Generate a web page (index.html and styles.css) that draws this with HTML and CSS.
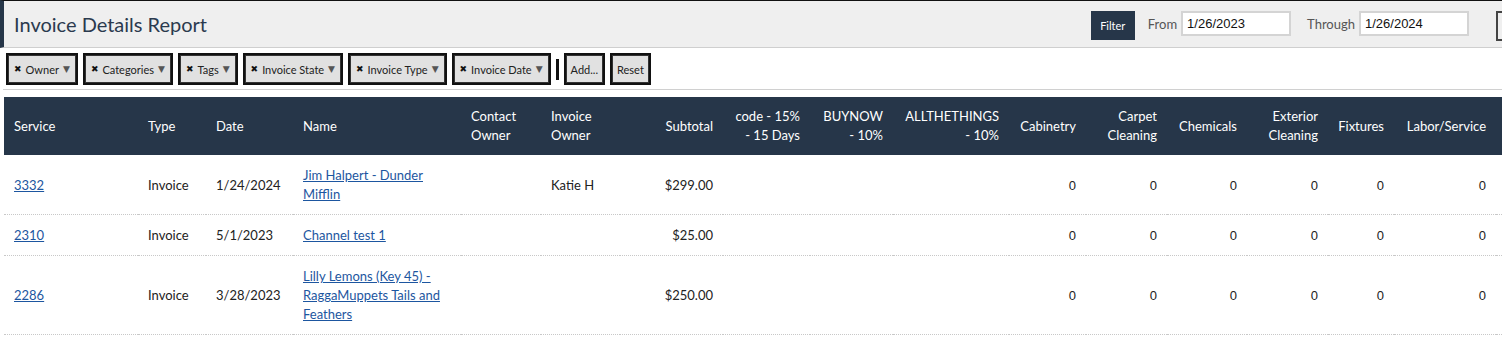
FILE: index.html
```html
<!DOCTYPE html>
<html lang="en">
<head>
    <meta charset="UTF-8">
    <meta name="viewport" content="width=device-width, initial-scale=1.0">
    <title>Invoice Details Report</title>
    <link rel="stylesheet" href="styles.css">
</head>
<body>
    <div class="page-header">
        <h1 class="page-title">Invoice Details Report</h1>
        <div class="header-controls">
            <button class="filter-btn">Filter</button>
            <label class="date-label">From</label>
            <input class="date-input" type="text" value="1/26/2023">
            <label class="date-label through">Through</label>
            <input class="date-input" type="text" value="1/26/2024">
            <button class="export-btn"></button>
        </div>
    </div>

    <div class="chip-bar">
        <span class="chip"><span class="chip-x">&#10006;</span>Owner<span class="chip-arrow">&#9660;</span></span>
        <span class="chip"><span class="chip-x">&#10006;</span>Categories<span class="chip-arrow">&#9660;</span></span>
        <span class="chip"><span class="chip-x">&#10006;</span>Tags<span class="chip-arrow">&#9660;</span></span>
        <span class="chip"><span class="chip-x">&#10006;</span>Invoice State<span class="chip-arrow">&#9660;</span></span>
        <span class="chip"><span class="chip-x">&#10006;</span>Invoice Type<span class="chip-arrow">&#9660;</span></span>
        <span class="chip"><span class="chip-x">&#10006;</span>Invoice Date<span class="chip-arrow">&#9660;</span></span>
        <span class="chip-sep"></span>
        <span class="chip plain">Add...</span>
        <span class="chip plain">Reset</span>
    </div>

    <table class="report-table">
        <colgroup>
            <col class="w-service">
            <col class="w-type">
            <col class="w-date">
            <col class="w-name">
            <col class="w-contact">
            <col class="w-owner">
            <col class="w-subtotal">
            <col class="w-code">
            <col class="w-buynow">
            <col class="w-allthethings">
            <col class="w-cabinetry">
            <col class="w-carpet">
            <col class="w-chemicals">
            <col class="w-exterior">
            <col class="w-fixtures">
            <col class="w-labor">
            <col class="w-more">
        </colgroup>
        <thead>
            <tr>
                <th>Service</th>
                <th>Type</th>
                <th>Date</th>
                <th>Name</th>
                <th>Contact<br>Owner</th>
                <th>Invoice<br>Owner</th>
                <th class="num">Subtotal</th>
                <th class="num">code - 15%<br>- 15 Days</th>
                <th class="num">BUYNOW<br>- 10%</th>
                <th class="num">ALLTHETHINGS<br>- 10%</th>
                <th class="num">Cabinetry</th>
                <th class="num">Carpet<br>Cleaning</th>
                <th class="num">Chemicals</th>
                <th class="num">Exterior<br>Cleaning</th>
                <th class="num">Fixtures</th>
                <th class="num">Labor/Service</th>
                <th></th>
            </tr>
        </thead>
        <tbody>
            <tr>
                <td><a href="#">3332</a></td>
                <td>Invoice</td>
                <td>1/24/2024</td>
                <td><a href="#">Jim Halpert - Dunder Mifflin</a></td>
                <td></td>
                <td>Katie H</td>
                <td class="num">$299.00</td>
                <td class="num"></td>
                <td class="num"></td>
                <td class="num"></td>
                <td class="num zero">0</td>
                <td class="num zero">0</td>
                <td class="num zero">0</td>
                <td class="num zero">0</td>
                <td class="num zero">0</td>
                <td class="num zero">0</td>
                <td></td>
            </tr>
            <tr>
                <td><a href="#">2310</a></td>
                <td>Invoice</td>
                <td>5/1/2023</td>
                <td><a href="#">Channel test 1</a></td>
                <td></td>
                <td></td>
                <td class="num">$25.00</td>
                <td class="num"></td>
                <td class="num"></td>
                <td class="num"></td>
                <td class="num zero">0</td>
                <td class="num zero">0</td>
                <td class="num zero">0</td>
                <td class="num zero">0</td>
                <td class="num zero">0</td>
                <td class="num zero">0</td>
                <td></td>
            </tr>
            <tr>
                <td><a href="#">2286</a></td>
                <td>Invoice</td>
                <td>3/28/2023</td>
                <td><a href="#">Lilly Lemons (Key 45) - RaggaMuppets Tails and Feathers</a></td>
                <td></td>
                <td></td>
                <td class="num">$250.00</td>
                <td class="num"></td>
                <td class="num"></td>
                <td class="num"></td>
                <td class="num zero">0</td>
                <td class="num zero">0</td>
                <td class="num zero">0</td>
                <td class="num zero">0</td>
                <td class="num zero">0</td>
                <td class="num zero">0</td>
                <td></td>
            </tr>
        </tbody>
    </table>
</body>
</html>
```

FILE: styles.css
```css
html, body {
    overflow: hidden;
}
body {
    margin: 0;
    background-color: #fff;
    font-family: Lato, "Open Sans", sans-serif;
    color: #222;
}
.page-header {
    display: flex;
    align-items: center;
    height: 46px;
    background-color: #efefef;
    border-top: 1px solid #111;
    border-left: 4px solid #263649;
    border-bottom: 1px solid #cfcfcf;
    overflow: hidden;
}
.page-title {
    margin: 0 0 0 10px;
    font-size: 20px;
    font-weight: 400;
    color: #2b3a4e;
}
.header-controls {
    display: flex;
    align-items: center;
    margin-left: auto;
    margin-right: -34px;
}
.filter-btn {
    width: 44px;
    height: 29px;
    border: none;
    background-color: #263649;
    color: #fff;
    font-family: inherit;
    font-size: 11px;
    padding: 0;
    margin-top: 2px;
}
.date-label {
    font-size: 13px;
    color: #555;
    margin: 0 4px 0 13px;
}
.date-label.through {
    margin-left: 16px;
}
.date-input {
    width: 110px;
    height: 25px;
    box-sizing: border-box;
    border: 2px solid #d4d4d4;
    padding: 0 4px;
    font-family: "Liberation Sans", Arial, sans-serif;
    font-size: 13px;
    color: #111;
    background: #fff;
    margin-top: -2px;
}
.export-btn {
    width: 40px;
    height: 30px;
    margin-left: 27px;
    margin-top: 3px;
    border: 2px solid #444;
    background: #efefef;
}
.chip-bar {
    display: flex;
    align-items: center;
    gap: 5px;
    margin-left: 3px;
    padding: 5px 3px 4px;
    border-bottom: 1px solid #d0d0d0;
}
.chip {
    display: inline-flex;
    align-items: center;
    height: 32px;
    box-sizing: border-box;
    padding: 0 6px;
    background-color: #e1e1e1;
    border: 2px solid #111;
    outline: 1px solid #333;
    outline-offset: -3px;
    font-size: 11px;
    color: #222;
}
.chip-x {
    font-family: "DejaVu Sans", sans-serif;
    font-size: 9px;
    margin-right: 4px;
    color: #111;
}
.chip-arrow {
    font-family: "DejaVu Sans", sans-serif;
    font-size: 9px;
    margin-left: 4px;
    color: #555;
}
.chip.plain {
    padding: 0 5px;
}
.chip-sep {
    width: 3px;
    height: 21px;
    background-color: #111;
}
.report-table {
    margin: 7px 0 0 4px;
    border-collapse: collapse;
    table-layout: fixed;
    width: 1592px;
    font-size: 13px;
    line-height: 19px;
}
.report-table th {
    background-color: #263649;
    color: #fff;
    font-weight: 400;
    text-align: left;
    padding: 10px;
    vertical-align: middle;
}
.report-table td {
    padding: 11px 10px 10px;
    border-bottom: 1px dotted #c8c8c8;
    vertical-align: middle;
    color: #222;
}
.report-table .num {
    text-align: right;
}
.report-table .zero {
    font-family: "Liberation Sans", Arial, sans-serif;
}
.report-table a {
    color: #1d56a0;
    text-decoration: underline;
}
.w-service { width: 134px; }
.w-type { width: 68px; }
.w-date { width: 87px; }
.w-name { width: 168px; }
.w-contact { width: 80px; }
.w-owner { width: 79px; }
.w-subtotal { width: 103px; }
.w-code { width: 87px; }
.w-buynow { width: 83px; }
.w-allthethings { width: 116px; }
.w-cabinetry { width: 77px; }
.w-carpet { width: 81px; }
.w-chemicals { width: 80px; }
.w-exterior { width: 81px; }
.w-fixtures { width: 66px; }
.w-labor { width: 102px; }
.w-more { width: 100px; }
```
